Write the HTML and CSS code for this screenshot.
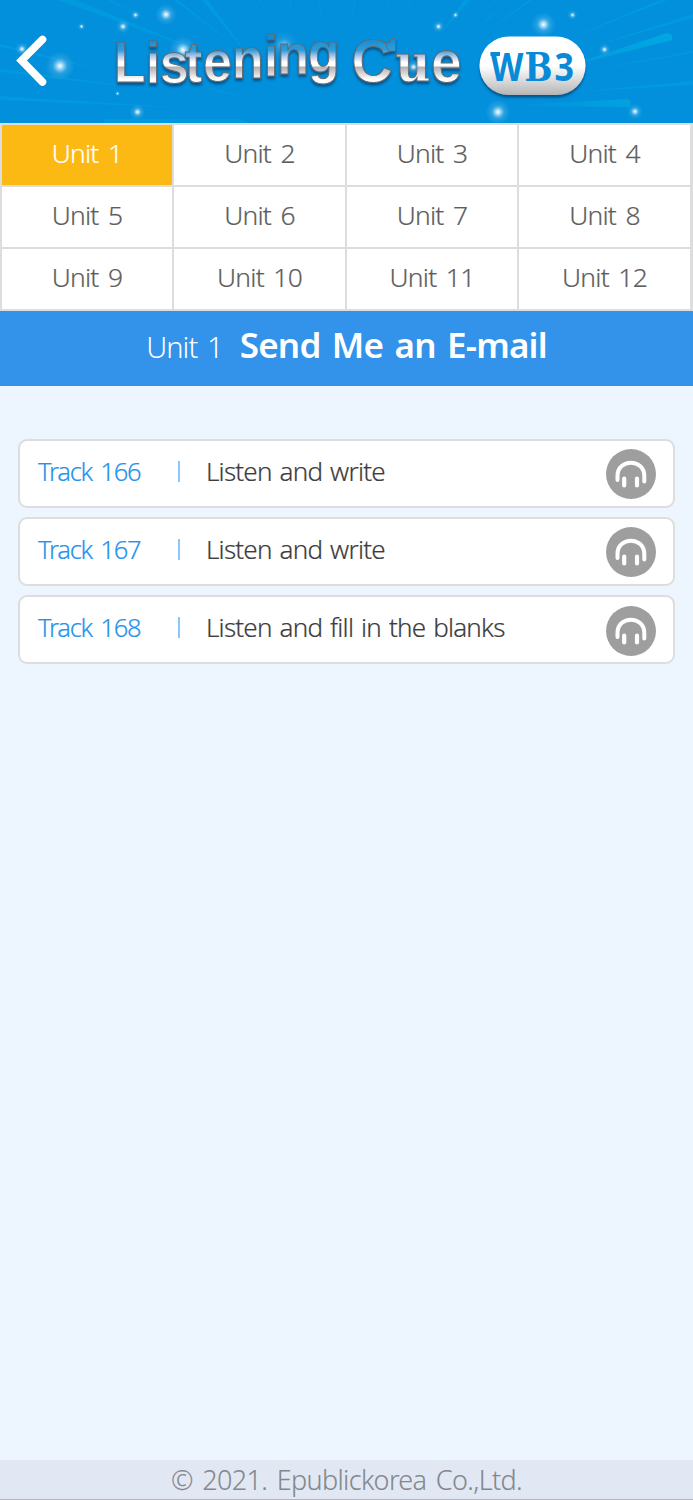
FILE: index.html
```html
<!DOCTYPE html>
<html lang="en">
<head>
<meta charset="utf-8">
<title>Listening Cue WB 3</title>
<link rel="stylesheet" href="styles.css">
</head>
<body>
<header class="banner">
<svg class="banner-art" viewBox="0 0 693 123" width="693" height="123" role="img" aria-label="Listening Cue WB 3">
  <defs>
    <linearGradient id="chrome" gradientUnits="userSpaceOnUse" x1="0" y1="38" x2="0" y2="84">
      <stop offset="0" stop-color="#168bd0"/><stop offset=".27" stop-color="#2f9edc"/><stop offset=".4" stop-color="#b5c9e4"/><stop offset=".53" stop-color="#fff"/><stop offset=".61" stop-color="#fff"/><stop offset=".63" stop-color="#b2b0b0"/><stop offset=".76" stop-color="#d5d3d3"/><stop offset=".9" stop-color="#fff"/>
    </linearGradient>
    <linearGradient id="pill" x1="0" y1="0" x2="0" y2="1">
      <stop offset=".5" stop-color="#fff"/><stop offset="1" stop-color="#b5b5b7"/>
    </linearGradient>
    <radialGradient id="glow">
      <stop offset="0" stop-color="#fff"/><stop offset=".2" stop-color="#c8e9fa" stop-opacity=".8"/><stop offset=".5" stop-color="#7dc9f0" stop-opacity=".3"/><stop offset="1" stop-color="#5ab8ea" stop-opacity="0"/>
    </radialGradient>
    <linearGradient id="ray" x1="0" x2="1"><stop offset="0" stop-color="#00a8e5" stop-opacity="0"/><stop offset="1" stop-color="#00a8e2"/></linearGradient>
    <filter id="shadow" x="-10%" y="-20%" width="120%" height="150%"><feDropShadow dx="0" dy="2.5" stdDeviation="1.2" flood-color="#003e6b" flood-opacity=".7"/></filter>
  </defs>
  <g class="rays">
    <path d="M0 44L115 73 0 47zM0 69L190 94 0 72zM0 96L190 108 0 100zM58 0L200 51 76 0zM108 0L180 36 111 0zM174 0L240 50 178 0zM202 0L252 60 208 0zM464 0L440 35 470 0zM495 14L462 43 493 14zM529 0L480 37 532 0zM660 0L560 42 668 0zM693 14L580 50 693 18zM693 51L580 72 693 53zM693 81L575 92 693 85z"/>
    <path d="M104 119H240L250 123H104zM210 88L265 102 209 89z"/>
  </g>
  <path class="rays rays-faint" d="M233 0L262 40 235 0zM258 0L280 32 260 0zM289 0L294 28 291 0zM318 0L322 26 320 0zM354 0L350 28 356 0zM387 0L378 30 389 0zM410 0L399 28 412 0zM495 0L461 36 497 0z"/>
  <path d="M585 60L667 33Q674 34 672 40L586 62zM530 104L500 106 628 107Q634 103 628 99z" fill="url(#ray)"/>
  <g fill="url(#glow)">
    <circle cx="60" cy="66" r="15"/><circle cx="166" cy="14.500" r="11"/><circle cx="123" cy="26.500" r="7"/><circle cx="135.500" cy="15" r="5"/><circle cx="81.500" cy="26.500" r="4"/><circle cx="22" cy="49" r="7"/><circle cx="137.500" cy="112" r="8"/><circle cx="117.500" cy="93.500" r="3"/><circle cx="183" cy="50" r="14"/><circle cx="284" cy="46" r="15" opacity=".6"/><circle cx="438.500" cy="26.500" r="6"/><circle cx="455.500" cy="15" r="4"/><circle cx="543.500" cy="24.500" r="13"/><circle cx="572.500" cy="15" r="5"/><circle cx="604.500" cy="49.500" r="6"/><circle cx="498" cy="112" r="13"/><circle cx="635" cy="111.500" r="8"/>
  </g>
  <path d="M42.500 39.500L21.500 60.500 42.500 82" fill="none" stroke="#fff" stroke-width="7.600" stroke-linecap="round"/>
  <g filter="url(#shadow)">
    <text class="logo" transform="scale(.9 1)" x="126.500 162 177.500 205.500 225.500 257.500 293 308 342" y="82 83.500 83.500 82 81 78 76 74 72.500">Listening</text>
    <text class="logo logo-cue" transform="scale(.92 1)" x="382 429.500 468.500" y="82.500 81.500 82"><tspan class="cap">C</tspan><tspan class="slab">u</tspan><tspan class="low">e</tspan></text>
    <path class="serif" d="M386.500 47V43L390 42 391.500 38.500H395.500V51H389z"/>
    <circle cx="413.500" cy="67" r="7" fill="url(#glow)"/>
  </g>
  <g filter="url(#shadow)"><rect x="479.500" y="36.500" width="106" height="58.500" rx="29.250" fill="url(#pill)"/></g>
  <text class="level" transform="scale(.85 1)" x="577 617 652.500" y="81">W<tspan class="level-slab">B</tspan>3</text>
  <path class="level-mark" d="M490.500 52H500V56H490.500z"/>
</svg>
</header>
<nav class="units">
  <a class="unit unit-active">Unit 1</a><a class="unit">Unit 2</a><a class="unit">Unit 3</a><a class="unit">Unit 4</a>
  <a class="unit">Unit 5</a><a class="unit">Unit 6</a><a class="unit">Unit 7</a><a class="unit">Unit 8</a>
  <a class="unit">Unit 9</a><a class="unit">Unit 10</a><a class="unit">Unit 11</a><a class="unit">Unit 12</a>
</nav>
<h1 class="heading"><span class="heading-unit">Unit 1</span><span class="heading-title">Send Me an E-mail</span></h1>
<main class="tracks">
  <div class="track"><span class="track-no">Track 166</span><i class="bar"></i><span class="track-name">Listen and write</span>
    <svg class="listen" viewBox="0 0 50 50"><circle cx="25" cy="25" r="25"/><path d="M11.500 31V27C11.500 9.300 38.300 9.300 38.300 27V32.500" stroke-width="4"/><path d="M18.200 29.500V36.500M31 29.500V36.500" stroke-width="4.200"/></svg></div>
  <div class="track"><span class="track-no">Track 167</span><i class="bar"></i><span class="track-name">Listen and write</span>
    <svg class="listen" viewBox="0 0 50 50"><circle cx="25" cy="25" r="25"/><path d="M11.500 31V27C11.500 9.300 38.300 9.300 38.300 27V32.500" stroke-width="4"/><path d="M18.200 29.500V36.500M31 29.500V36.500" stroke-width="4.200"/></svg></div>
  <div class="track"><span class="track-no">Track 168</span><i class="bar"></i><span class="track-name">Listen and fill in the blanks</span>
    <svg class="listen" viewBox="0 0 50 50"><circle cx="25" cy="25" r="25"/><path d="M11.500 31V27C11.500 9.300 38.300 9.300 38.300 27V32.500" stroke-width="4"/><path d="M18.200 29.500V36.500M31 29.500V36.500" stroke-width="4.200"/></svg></div>
</main>
<footer class="footer">© 2021. Epublickorea Co.,Ltd.</footer>
</body>
</html>
```
FILE: styles.css
```css
* { box-sizing: border-box; }
body {
  margin: 0;
  height: 1500px;
  display: flex;
  flex-direction: column;
  background: #edf5ff;
  font-family: "Noto Sans", "Open Sans", sans-serif;
  font-weight: 300;
  -webkit-text-stroke: .2px currentColor;
}
.banner { height: 123px; background: #028fdb; -webkit-text-stroke: 0; }
.banner-art { display: block; }
.rays { fill: #00a5e2; opacity: .5; }
.rays-faint { opacity: .3; }
.logo {
  font: bold 58px "Liberation Sans", Arial, sans-serif;
  fill: url(#chrome);
  stroke: #66696e;
  stroke-width: 1px;
}
.cap { font-size: 62px; }
.slab { font-family: "DejaVu Serif", serif; font-size: 53px; }
.low { font-size: 60px; }
.serif { fill: url(#chrome); stroke: #66696e; stroke-width: .8px; }
.level { font: bold 40px "Noto Sans", sans-serif; fill: #078ad7; }
.level-slab { font-family: "DejaVu Serif", serif; font-size: 39px; }
.level-mark { fill: #078ad7; }
.units {
  height: 188px;
  padding: 2px 3px 2px 2px;
  background: #ddd;
  display: grid;
  grid-template-columns: 170px 171px 170px 171px;
  grid-template-rows: repeat(3, 60px);
  gap: 2px;
}
.unit {
  background: #fff;
  color: #5e5e5e;
  font-size: 26.4px;
  line-height: 56px;
  text-align: center;
  letter-spacing: -.8px;
  word-spacing: 3.500px;
}
.unit-active { background: #fdb913; color: #fff; }
.heading {
  margin: 0;
  height: 75px;
  background: #3392e9;
  color: #fff;
  display: flex;
  justify-content: center;
  align-items: baseline;
  gap: 17px;
  line-height: 68px;
  white-space: pre;
}
.heading-unit { font-size: 29px; font-weight: 300; letter-spacing: -.9px; word-spacing: 3px; -webkit-text-stroke: 0; }
.heading-title { font-size: 35px; font-weight: 600; letter-spacing: -.8px; word-spacing: 3px; -webkit-text-stroke: 0; }
.tracks {
  flex: 1;
  padding: 53px 18px 0;
  display: flex;
  flex-direction: column;
  gap: 9.700px;
}
.track {
  height: 68.500px;
  border: 2px solid #ddd;
  border-radius: 9px;
  background: #fff;
  display: flex;
  align-items: center;
  padding: 0 17px 0 18px;
  font-size: 26px;
  white-space: nowrap;
}
.track-no { width: 140px; color: #2692eb; padding-bottom: 5px; font-size: 25.500px; letter-spacing: -1.250px; word-spacing: 3px; }
.bar { width: 2px; height: 21px; margin-bottom: 4px; background: #8bc7fa; }
.track-name { margin-left: 26px; color: #3d3d3d; padding-bottom: 5px; letter-spacing: -.78px; word-spacing: 1.900px; }
.listen { width: 50px; height: 50px; margin-left: auto; margin-top: 2px; fill: #9e9e9e; }
.listen path { fill: none; stroke: #fff; stroke-linecap: round; }
.footer {
  height: 40px;
  background: #e1e8f3;
  border-bottom: 1px solid #b3b6c2;
  color: #84888e;
  font-size: 27px;
  line-height: 39px;
  text-align: center;
  letter-spacing: -.65px;
  word-spacing: 3px;
  -webkit-text-stroke-width: .1px;
}
```
